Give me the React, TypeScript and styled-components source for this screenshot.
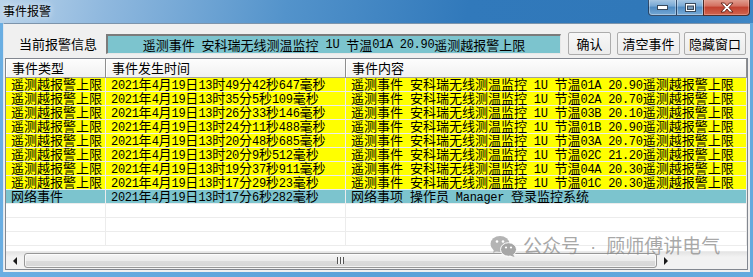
import React from "react";
import styled, { createGlobalStyle } from "styled-components";

type Kind = "alarm" | "net" | "blank";

type Row = {
  kind: Kind;
  type: string;
  time: string;
  content: string;
};

const alarm = (time: string, node: string, value: string): Row => ({
  kind: "alarm",
  type: "遥测越报警上限",
  time: `2021年4月19日13时${time}毫秒`,
  content: `遥测事件 安科瑞无线测温监控 1U 节温${node} ${value}遥测越报警上限`,
});

const blank: Row = { kind: "blank", type: "", time: "", content: "" };

const rows: Row[] = [
  alarm("49分42秒647", "01A", "20.90"),
  alarm("35分5秒109", "02A", "20.70"),
  alarm("26分33秒146", "03B", "20.10"),
  alarm("24分11秒488", "01B", "20.90"),
  alarm("20分48秒685", "03A", "20.70"),
  alarm("20分9秒512", "02C", "21.20"),
  alarm("19分37秒911", "04A", "20.30"),
  alarm("17分29秒23", "01C", "20.30"),
  {
    kind: "net",
    type: "网络事件",
    time: "2021年4月19日13时17分6秒282毫秒",
    content: "网络事项 操作员 Manager 登录监控系统",
  },
  blank,
  blank,
  blank,
];

const rowColors: Record<Kind, string> = {
  alarm: "#ffff00",
  net: "#7cc4ce",
  blank: "#ffffff",
};

// ascii runs get a narrow mono face so they sit at half the CJK width
const Mixed: React.FC<{ text: string }> = ({ text }) => (
  <>
    {text.split(/([\x20-\x7e]+)/).map((part, i) =>
      i % 2 ? <Latin key={i}>{part}</Latin> : part
    )}
  </>
);

const WeChatIcon = () => (
  <svg width="27" height="22" viewBox="0 0 27 22">
    <ellipse cx="10" cy="9" rx="9.5" ry="8" fill="#b4b4b4" />
    <path d="M4 14 L3 18 L8 15.5 Z" fill="#b4b4b4" />
    <circle cx="7" cy="6.5" r="1.3" fill="#ffffff" />
    <circle cx="13" cy="6.5" r="1.3" fill="#ffffff" />
    <ellipse cx="18.5" cy="14.5" rx="8" ry="6.8" fill="#a6a6a6" stroke="#ffffff" strokeWidth="1" />
    <path d="M23 19 L24.5 22 L20 20.5 Z" fill="#a6a6a6" />
    <circle cx="16" cy="12.5" r="1.1" fill="#ffffff" />
    <circle cx="21" cy="12.5" r="1.1" fill="#ffffff" />
  </svg>
);

const App: React.FC = () => {
  return (
    <>
      <GlobalStyle />
      <Window>
        <TitleBar>
          <Caption>事件报警</Caption>
          <CaptionButtons>
            <GlassButton $w={28} $side="left">
              <svg width="11" height="5" viewBox="0 0 11 5">
                <rect x="0.5" y="0.5" width="10" height="4" fill="#fff" stroke="#3a4a5c" />
              </svg>
            </GlassButton>
            <GlassButton $w={27} $side="mid">
              <svg width="11" height="9" viewBox="0 0 11 9">
                <rect x="0.5" y="0.5" width="10" height="8" fill="#fff" stroke="#3a4a5c" />
                <rect x="2.5" y="3" width="6" height="3.5" fill="#7a9ab8" stroke="#3a4a5c" />
              </svg>
            </GlassButton>
            <CloseButton>
              <svg width="14" height="11" viewBox="0 0 14 11">
                <path
                  d="M1 1 H4.5 L7 4 L9.5 1 H13 L9 5.5 L13 10 H9.5 L7 7 L4.5 10 H1 L5 5.5 Z"
                  fill="#fff"
                  stroke="#5a1d14"
                  strokeWidth="0.9"
                />
              </svg>
            </CloseButton>
          </CaptionButtons>
        </TitleBar>
        <Client>
          <Toolbar>
            <FieldLabel>当前报警信息</FieldLabel>
            <AlarmField>
              <Mixed text="遥测事件 安科瑞无线测温监控 1U 节温01A 20.90遥测越报警上限" />
            </AlarmField>
            <Button $w={43} $gap={7}>确认</Button>
            <Button $w={63} $gap={6}>清空事件</Button>
            <Button $w={62} $gap={4}>隐藏窗口</Button>
          </Toolbar>
          <ListBox>
            <Header>
              <HeaderCell>事件类型</HeaderCell>
              <HeaderCell>事件发生时间</HeaderCell>
              <HeaderCell>事件内容</HeaderCell>
            </Header>
            <Body>
              {rows.map((row, i) => (
                <ListRow key={i}>
                  <Cell $bg={rowColors[row.kind]}>{row.type}</Cell>
                  <Cell $bg={rowColors[row.kind]}>
                    <Mixed text={row.time} />
                  </Cell>
                  <Cell $bg={rowColors[row.kind]}>
                    <Mixed text={row.content} />
                  </Cell>
                </ListRow>
              ))}
            </Body>
            <ScrollBar>
              <ArrowButton>
                <Arrow $dir="left" />
              </ArrowButton>
              <Thumb>
                <Grip />
              </Thumb>
              <ArrowButton>
                <Arrow $dir="right" />
              </ArrowButton>
            </ScrollBar>
            <Watermark>
              <WeChatIcon />
              <WatermarkText>
                公众号<Dot>·</Dot>顾师傅讲电气
              </WatermarkText>
            </Watermark>
          </ListBox>
        </Client>
      </Window>
    </>
  );
};

const GlobalStyle = createGlobalStyle`
  html, body {
    margin: 0;
    padding: 0;
  }
  body {
    width: 753px;
    height: 277px;
    overflow: hidden;
    font-family: "Noto Sans CJK SC", "Noto Sans", sans-serif;
  }
`;

const Latin = styled.span`
  font-family: "Liberation Mono", monospace;
  font-size: 12px;
  letter-spacing: -0.3px;
  white-space: pre;
`;

const Window = styled.div`
  width: 753px;
  height: 277px;
  display: flex;
  flex-direction: column;
  background: linear-gradient(to right, #6aaee2, #5aa1d8 50%, #64aade);
`;

const TitleBar = styled.div`
  height: 23px;
  flex: none;
  display: flex;
  justify-content: space-between;
  align-items: flex-start;
  padding-left: 3px;
  padding-right: 3px;
  background: linear-gradient(
    100deg,
    #b9d3ea 0%,
    #8fb8de 14%,
    #5393cb 38%,
    #3179bb 62%,
    #3078b9 85%,
    #3f87c6 100%
  );
`;

const Caption = styled.div`
  font-size: 12px;
  line-height: 14px;
  margin-top: 4px;
  color: #000;
  text-shadow: 0 0 6px rgba(255, 255, 255, 0.9);
`;

const CaptionButtons = styled.div`
  display: flex;
  height: 17px;
  margin-top: -1px;
`;

const GlassButton = styled.div<{ $w: number; $side: "left" | "mid" }>`
  width: ${(p) => p.$w}px;
  box-sizing: border-box;
  display: flex;
  align-items: center;
  justify-content: center;
  padding-top: 1px;
  border: 1px solid rgba(20, 40, 70, 0.75);
  border-top: none;
  border-right: none;
  border-bottom-left-radius: ${(p) => (p.$side === "left" ? "4px" : "0")};
  background: linear-gradient(
    rgba(255, 255, 255, 0.6),
    rgba(220, 235, 250, 0.4) 45%,
    rgba(120, 160, 200, 0.4) 50%,
    rgba(170, 205, 235, 0.55)
  );
  box-shadow: inset 0 0 0 1px rgba(255, 255, 255, 0.35);
`;

const CloseButton = styled.div`
  width: 47px;
  box-sizing: border-box;
  display: flex;
  align-items: center;
  justify-content: center;
  padding-top: 1px;
  border: 1px solid rgba(40, 20, 20, 0.8);
  border-top: none;
  border-bottom-right-radius: 4px;
  background: linear-gradient(#e3a496, #d36f5f 45%, #c2402f 50%, #d0644f);
  box-shadow: inset 0 0 0 1px rgba(255, 200, 190, 0.4);
`;

const Client = styled.div`
  flex: 1;
  margin: 0 3px 5px 3px;
  display: flex;
  flex-direction: column;
  box-sizing: border-box;
  padding: 8px 2px 2px 0;
  background: #f0f0f0;
  border-top: 1px solid #7d94ab;
  border-left: 1px solid #dfe7ef;
`;

const Toolbar = styled.div`
  display: flex;
  align-items: center;
  height: 23px;
  padding-left: 15px;
`;

const FieldLabel = styled.div`
  width: 87px;
  font-size: 13px;
  line-height: 16px;
  color: #000;
`;

const AlarmField = styled.div`
  width: 455px;
  height: 20px;
  box-sizing: border-box;
  display: flex;
  align-items: center;
  justify-content: center;
  padding-top: 1px;
  background: #7cc4ce;
  border-style: solid;
  border-width: 2px 1px 1px 2px;
  border-color: #7b7b7b #e8e8e8 #e8e8e8 #7b7b7b;
  font-size: 13px;
  line-height: 14px;
  white-space: nowrap;
  color: #000;
`;

const Button = styled.button<{ $w: number; $gap: number }>`
  width: ${(p) => p.$w}px;
  height: 23px;
  margin-left: ${(p) => p.$gap}px;
  padding: 0;
  box-sizing: border-box;
  font-family: "Noto Sans CJK SC", sans-serif;
  font-size: 13px;
  line-height: 14px;
  color: #000;
  border: 1px solid #acacac;
  border-radius: 2px;
  background: linear-gradient(#f7f7f7, #ececec);
`;

const ListBox = styled.div`
  position: relative;
  margin-top: 3px;
  margin-left: 1px;
  height: 212px;
  box-sizing: border-box;
  display: flex;
  flex-direction: column;
  overflow: hidden;
  background: #fff;
  border: 1px solid #828790;
`;

const Header = styled.div`
  display: grid;
  grid-template-columns: 100px 240px 1fr;
  height: 19px;
  flex: none;
`;

const HeaderCell = styled.div`
  box-sizing: border-box;
  padding-left: 6px;
  font-size: 13px;
  line-height: 17px;
  color: #000;
  background: linear-gradient(#fdfdfd, #f1f1f1);
  border-right: 1px solid #8e8e8e;
  border-bottom: 1px solid #a0a0a0;
  box-shadow: inset 1px 1px #ffffff;
`;

const Body = styled.div`
  flex: 1;
  min-height: 0;
`;

const ListRow = styled.div`
  display: grid;
  grid-template-columns: 100px 240px 1fr;
  height: 14px;
`;

const Cell = styled.div<{ $bg: string }>`
  box-sizing: border-box;
  height: 14px;
  padding: 1px 0 0 5px;
  font-family: "Liberation Sans", "Noto Sans CJK SC", sans-serif;
  font-size: 13px;
  line-height: 12px;
  white-space: nowrap;
  color: #000;
  background: ${(p) => p.$bg};
  border-right: 1px solid #ececec;
  border-bottom: 1px solid #ececec;
`;

const ScrollBar = styled.div`
  height: 17px;
  flex: none;
  display: flex;
  align-items: stretch;
  background: linear-gradient(#e4e4e4, #f2f2f2 30%, #f2f2f2);
  border-top: 1px solid #eaeaea;
`;

const ArrowButton = styled.div`
  width: 17px;
  flex: none;
  display: flex;
  align-items: center;
  justify-content: center;
`;

const Arrow = styled.div<{ $dir: "left" | "right" }>`
  width: 0;
  height: 0;
  border-top: 4px solid transparent;
  border-bottom: 4px solid transparent;
  ${(p) =>
    p.$dir === "left"
      ? "border-right: 4px solid #1a1a1a;"
      : "border-left: 4px solid #1a1a1a;"}
`;

const Thumb = styled.div`
  width: 633px;
  margin: 1px 0 1px 1px;
  box-sizing: border-box;
  display: flex;
  align-items: center;
  justify-content: center;
  border: 1px solid #979797;
  border-radius: 3px;
  background: linear-gradient(#f5f5f5, #ececec 50%, #dcdcdc 51%, #d6d6d6);
  box-shadow: inset 0 0 0 1px rgba(255, 255, 255, 0.7);
`;

const Grip = styled.div`
  width: 7px;
  height: 7px;
  background: repeating-linear-gradient(
    to right,
    #555 0,
    #555 1px,
    #f4f4f4 1px,
    #f4f4f4 3px
  );
`;

const Watermark = styled.div`
  position: absolute;
  left: 484px;
  top: 176px;
  display: flex;
  align-items: center;
  gap: 6px;
  pointer-events: none;
`;

const WatermarkText = styled.span`
  font-size: 19px;
  line-height: 20px;
  color: rgba(140, 140, 140, 0.75);
  white-space: nowrap;
`;

const Dot = styled.span`
  font-family: "Liberation Sans", sans-serif;
  margin: 0 10px;
`;

export default App;
